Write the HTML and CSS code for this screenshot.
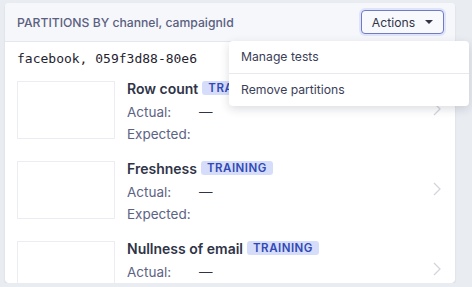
FILE: index.html
```html
<!DOCTYPE html>
<html lang="en">
<head>
    <meta charset="UTF-8" />
    <title>Partitions</title>
    <link rel="stylesheet" href="styles.css">
</head>
<body>
    <div class="partition-card">
        <div class="card-header">
            <span class="header-title">PARTITIONS BY channel, campaignId</span>
            <button class="actions-button">
                Actions
                <span class="caret"></span>
            </button>
        </div>
        <div class="card-body">
            <div class="partition-key">facebook, 059f3d88-80e6</div>

            <div class="test-row">
                <div class="thumb"></div>
                <div class="test-info">
                    <div class="test-title">Row count <span class="badge">TRAINING</span></div>
                    <div class="metric"><span class="metric-label">Actual:</span><span class="metric-value">—</span></div>
                    <div class="metric"><span class="metric-label">Expected:</span><span class="metric-value"></span></div>
                </div>
                <svg class="chevron" width="8" height="14" viewBox="0 0 8 14"><path d="M1 1l6 6-6 6" fill="none" stroke="#d3d5dc" stroke-width="1.3"/></svg>
            </div>

            <div class="test-row">
                <div class="thumb"></div>
                <div class="test-info">
                    <div class="test-title">Freshness <span class="badge">TRAINING</span></div>
                    <div class="metric"><span class="metric-label">Actual:</span><span class="metric-value">—</span></div>
                    <div class="metric"><span class="metric-label">Expected:</span><span class="metric-value"></span></div>
                </div>
                <svg class="chevron" width="8" height="14" viewBox="0 0 8 14"><path d="M1 1l6 6-6 6" fill="none" stroke="#d3d5dc" stroke-width="1.3"/></svg>
            </div>

            <div class="test-row">
                <div class="thumb"></div>
                <div class="test-info">
                    <div class="test-title">Nullness of email <span class="badge">TRAINING</span></div>
                    <div class="metric"><span class="metric-label">Actual:</span><span class="metric-value">—</span></div>
                    <div class="metric"><span class="metric-label">Expected:</span><span class="metric-value"></span></div>
                </div>
                <svg class="chevron" width="8" height="14" viewBox="0 0 8 14"><path d="M1 1l6 6-6 6" fill="none" stroke="#d3d5dc" stroke-width="1.3"/></svg>
            </div>
        </div>

        <div class="actions-menu">
            <div class="menu-item">Manage tests</div>
            <div class="menu-item">Remove partitions</div>
        </div>
    </div>
</body>
</html>
```

FILE: styles.css
```css
html {
    height: 100%;
}
body {
    margin: 0;
    padding: 3px 0 0 5px;
    background: #e9ecf1;
    font-family: Inter, "Noto Sans", sans-serif;
    color: #2f3447;
}
.partition-card {
    position: relative;
    width: 450px;
    height: 280px;
    background: #fff;
    border-radius: 4px;
    box-shadow: 0 1px 2px rgba(30, 40, 70, 0.12);
}
.card-header {
    display: flex;
    align-items: center;
    justify-content: space-between;
    height: 38px;
    padding: 0 11px 0 12px;
    background: #f6f7fb;
    border-bottom: 1px solid #e5e7ee;
    border-radius: 4px 4px 0 0;
}
.header-title {
    font-size: 12.2px;
    font-weight: 500;
    color: #5a607f;
    margin-top: 1px;
}
.actions-button {
    display: flex;
    align-items: center;
    justify-content: center;
    gap: 10px;
    width: 83px;
    height: 24px;
    padding: 0;
    font-family: inherit;
    font-size: 12.2px;
    color: #2f3447;
    background: #f8f9fd;
    border: 1px solid #6f7bc4;
    border-radius: 4px;
    box-shadow: 0 0 0 2px #e0e4fa;
}
.caret {
    width: 0;
    height: 0;
    border-left: 4px solid transparent;
    border-right: 4px solid transparent;
    border-top: 4px solid #2f3447;
}
.card-body {
    height: 241px;
    overflow: hidden;
    padding: 0 12px;
}
.partition-key {
    padding: 7px 0 0;
    height: 32px;
    box-sizing: border-box;
    line-height: 20px;
    font-family: "DejaVu Sans Mono", monospace;
    font-size: 13px;
    color: #1f2330;
}
.test-row {
    display: flex;
    align-items: flex-start;
    height: 80px;
    padding-top: 7px;
    box-sizing: border-box;
}
.thumb {
    width: 96px;
    height: 56px;
    border: 1px solid #ecedf2;
    flex-shrink: 0;
}
.test-info {
    flex: 1;
    margin-left: 12px;
}
.test-title {
    display: flex;
    align-items: center;
    gap: 4px;
    height: 16px;
    margin: -1px 0 5px;
    font-size: 14px;
    font-weight: 600;
    color: #2f3447;
}
.badge {
    display: inline-block;
    padding: 0 6px;
    height: 14px;
    line-height: 14px;
    font-size: 11.5px;
    font-weight: 600;
    letter-spacing: 0.5px;
    color: #3149b4;
    background: #d6ddfb;
    border-radius: 3px;
}
.metric {
    display: flex;
    height: 22px;
    line-height: 22px;
    font-size: 13.5px;
    color: #5d6384;
}
.metric-label {
    width: 72px;
}
.metric-value {
    color: #2f3447;
}
.chevron {
    margin: 21px 2px 0 0;
}
.actions-menu {
    position: absolute;
    top: 38px;
    left: 224px;
    width: 240px;
    background: #fff;
    border-radius: 4px;
    box-shadow: 0 3px 10px rgba(30, 40, 70, 0.16);
}
.menu-item {
    height: 32px;
    line-height: 32px;
    padding-left: 12px;
    font-size: 12.2px;
    color: #3a4058;
}
.menu-item + .menu-item {
    border-top: 1px solid #e8e9ee;
}
```
